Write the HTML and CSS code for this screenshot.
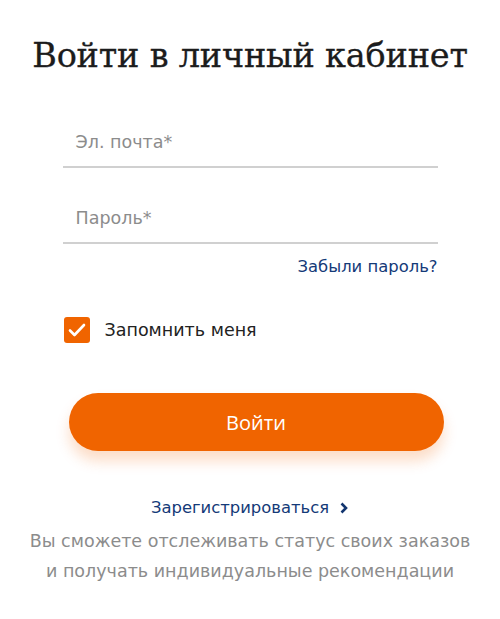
FILE: index.html
```html
<!DOCTYPE html>
<html lang="ru">
<head>
<meta charset="utf-8">
<link rel="stylesheet" href="styles.css">
</head>
<body>
<div class="page">
  <h1 class="title">Войти в личный кабинет</h1>
  <form class="form">
    <div class="field"><span class="placeholder">Эл. почта*</span></div>
    <div class="field"><span class="placeholder">Пароль*</span></div>
    <div class="forgot-row"><a class="link" href="#">Забыли пароль?</a></div>
    <label class="remember">
      <span class="checkbox">
        <svg width="18" height="14" viewBox="0 0 18 14"><path d="M2 7.5l4.5 4.5L16 2" fill="none" stroke="#fff" stroke-width="2.6" stroke-linecap="round" stroke-linejoin="round"/></svg>
      </span>
      <span class="remember-text">Запомнить меня</span>
    </label>
    <button class="btn" type="button">Войти</button>
  </form>
  <div class="register">
    <a class="link reg-link" href="#">Зарегистрироваться
      <svg width="10" height="12" viewBox="0 0 10 12"><path d="M2.5 1.5L7 6l-4.5 4.5" fill="none" stroke="#12356f" stroke-width="2.6"/></svg>
    </a>
    <p class="note">Вы сможете отслеживать статус своих заказов<br>и получать индивидуальные рекомендации</p>
  </div>
</div>
</body>
</html>
```
FILE: styles.css
```css
* { box-sizing: border-box; }
html, body { margin: 0; padding: 0; background: #fff; }
.page {
  width: 500px;
  padding-top: 36px;
  display: flex;
  flex-direction: column;
  align-items: center;
  font-family: "DejaVu Sans", sans-serif;
}
.title {
  margin: 0;
  font-family: "DejaVu Serif", serif;
  font-weight: normal;
  font-size: 33.5px;
  line-height: 40px;
  color: #1c1c1c;
  letter-spacing: -0.2px;
  -webkit-text-stroke: 0.3px #1c1c1c;
}
.form {
  width: 375px;
  margin-top: 40px;
  display: flex;
  flex-direction: column;
}
.field {
  height: 52px;
  border-bottom: 2px solid #d0d0d0;
  display: flex;
  align-items: center;
  padding-left: 13px;
  padding-top: 2px;
}
.field + .field { margin-top: 24px; }
.placeholder {
  font-size: 17.5px;
  color: #8c8c8c;
}
.forgot-row {
  display: flex;
  justify-content: flex-end;
  margin-top: 12px;
}
.link {
  color: #143a78;
  text-decoration: none;
  font-size: 16.4px;
  line-height: 22px;
}
.remember {
  display: flex;
  align-items: center;
  margin-top: 39px;
  margin-left: 1px;
  gap: 15px;
}
.checkbox {
  width: 26px;
  height: 26px;
  border-radius: 3px;
  background: #f06400;
  display: flex;
  align-items: center;
  justify-content: center;
}
.remember-text {
  font-size: 17.5px;
  color: #222;
}
.btn {
  margin-top: 50px;
  margin-left: 6px;
  width: 375px;
  height: 58px;
  border: none;
  border-radius: 29px;
  background: #f06400;
  color: #fff;
  font-family: "Open Sans", sans-serif;
  font-size: 20px;
  box-shadow: 0 10px 14px rgba(240, 100, 0, 0.22);
}
.register {
  margin-top: 46px;
  display: flex;
  flex-direction: column;
  align-items: center;
}
.reg-link {
  display: flex;
  align-items: center;
  gap: 10px;
}
.note {
  margin: 7px 0 0;
  text-align: center;
  font-size: 17.5px;
  line-height: 30px;
  color: #8c8c8c;
}
```
